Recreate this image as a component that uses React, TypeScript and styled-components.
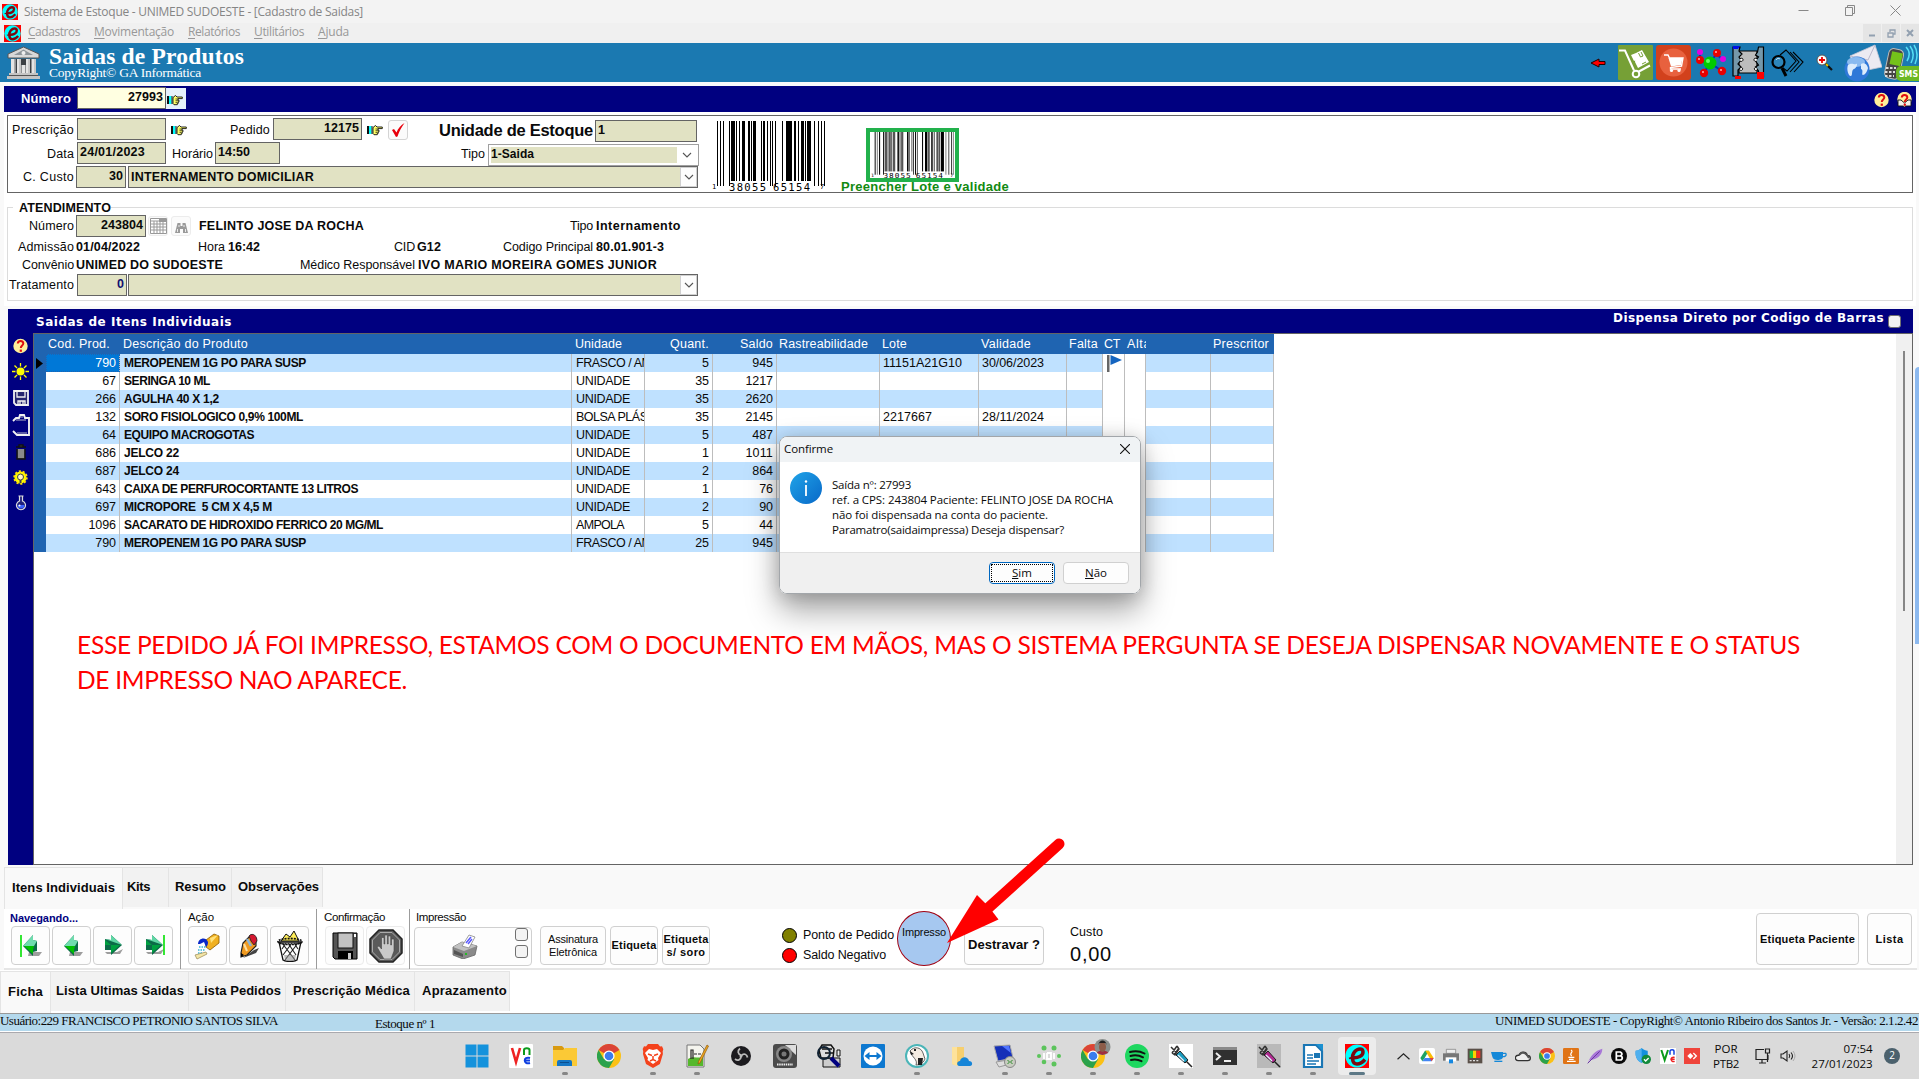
import React, { useLayoutEffect, useRef } from "react";
import styled, { createGlobalStyle, css } from "styled-components";

const ARIAL = '"Liberation Sans", Arial, sans-serif';
const TIMES = '"Liberation Serif", "Times New Roman", serif';
const SEGOE = '"Open Sans", "Noto Sans", sans-serif';
const VERDANA = '"DejaVu Sans", Verdana, sans-serif';

const Global = createGlobalStyle`
  *, *::before, *::after { box-sizing: border-box; }
  html, body { margin: 0; padding: 0; width: 1919px; height: 1079px; overflow: hidden; background: #fff; }
  body { font: 12px ${ARIAL}; color: #000; }
  svg { display: block; flex: none; }
`;

/* ---------- text ---------- */

const TextSpan = styled.span<{ $b?: boolean; $s?: number; $c?: string; $f?: string }>`
  display: inline-block;
  flex: none;
  width: max-content;
  white-space: pre;
  line-height: 1.15;
  font-family: ${(p) => p.$f || ARIAL};
  font-size: ${(p) => p.$s || 12.5}px;
  font-weight: ${(p) => (p.$b ? 700 : 400)};
  color: ${(p) => p.$c || "#0a0a0a"};
`;

type TProps = { w?: number; b?: boolean; s?: number; c?: string; f?: string; children: React.ReactNode };

/* Text whose tracking is adjusted so that it fills the given width. */
function T({ w, b, s, c, f, children }: TProps) {
  const ref = useRef<HTMLSpanElement>(null);
  useLayoutEffect(() => {
    const el = ref.current;
    if (!el || !w) return;
    el.style.letterSpacing = "0px";
    const n = (el.textContent || "").length;
    const natural = el.getBoundingClientRect().width;
    el.style.letterSpacing = (w - natural) / n + "px";
  }, [w, children]);
  return (
    <TextSpan ref={ref} $b={b} $s={s} $c={c} $f={f}>
      {children}
    </TextSpan>
  );
}

/* ---------- shared layout ---------- */

const Screen = styled.div`
  position: relative;
  width: 1919px;
  height: 1079px;
  display: flex;
  flex-direction: column;
  background: #f9f9f9;
  overflow: hidden;
  > * { flex-shrink: 0; }
`;
const Line = styled.div<{ $cols: string; $h: number; $mt?: number }>`
  display: grid;
  grid-template-columns: ${(p) => p.$cols};
  height: ${(p) => p.$h}px;
  margin-top: ${(p) => p.$mt || 0}px;
  align-items: center;
`;
const Cell = styled.div<{ $end?: boolean }>`
  display: flex;
  align-items: center;
  min-width: 0;
  justify-content: ${(p) => (p.$end ? "flex-end" : "flex-start")};
`;

/* ---------- window bars ---------- */

const TitleBar = styled.div`
  height: 23px;
  display: flex;
  align-items: center;
  background: #f3f3f3;
  padding: 0 16px 0 2px;
  gap: 6px;
`;
const MenuBar = styled.div`
  height: 20px;
  display: flex;
  align-items: center;
  background: #f0f0f0;
  padding-left: 4px;
`;
const MenuItems = styled.div`
  display: flex;
  gap: 14px;
  margin-left: 7px;
  margin-bottom: 2px;
  u { text-underline-offset: 2px; }
`;
const Spacer = styled.div`
  flex: 1;
`;
const WinControls = styled.div`
  display: flex;
  gap: 31px;
  margin-bottom: 2px;
`;
const MdiControls = styled.div`
  display: flex;
  gap: 1px;
`;
const MdiButton = styled.div`
  width: 18px;
  height: 18px;
  display: grid;
  place-items: center;
  background: #e5e5e5;
`;
const Header = styled.div`
  height: 39px;
  background: #1b79b1;
  display: flex;
  padding-left: 7px;
  align-items: center;
`;
const HeaderTitles = styled.div`
  display: flex;
  flex-direction: column;
  margin-left: 9px;
  margin-top: -1px;
  span + span { margin-top: -5px; }
`;
const HeaderIcons = styled.div`
  display: grid;
  grid-template-columns: 28px 38px 39px 37px 39px 45px 28px 38px 37px;
  align-items: center;
`;
const NumberBar = styled.div`
  margin: 4px 3px 0 4px;
  height: 26px;
  background: #000080;
  display: grid;
  grid-template-columns: 17px 56px 89px 20px 1fr 23px 19px;
  align-items: start;
`;
const LabelSlot = styled.div`
  height: 26px;
  display: flex;
  align-items: center;
  padding-top: 1px;
`;
const HandButton = styled.div`
  height: 21px;
  margin-top: 2px;
  background: #e5f1fb;
  display: flex;
  align-items: center;
  padding: 2px 0 0 1px;
`;

const Field = styled.div<{ $right?: boolean; $cream?: boolean; $combo?: boolean; $self?: string }>`
  height: 22px;
  border: 1px solid #646464;
  background: ${(p) => (p.$cream ? "#ffffe1" : "#e1e2c3")};
  display: flex;
  align-items: center;
  padding: 0 2px 1px 2px;
  justify-content: ${(p) => (p.$right ? "flex-end" : "flex-start")};
  ${(p) => p.$cream && css`margin-top: 1px;`}
  ${(p) => p.$self && css`align-self: ${p.$self};`}
  ${(p) => p.$combo && css`padding: 0 0 0 2px;`}
`;
const DropButton = styled.div`
  width: 17px;
  height: 20px;
  margin-left: auto;
  background: #fdfdfd;
  border: 1px solid #d0d0d0;
  display: grid;
  place-items: center;
`;
const TypeCombo = styled.div`
  height: 22px;
  margin-top: 2px;
  border: 1px solid #a0a0a0;
  background: #fff;
  padding: 2px;
  display: grid;
  grid-template-columns: 1fr 19px;
  place-items: stretch;
`;
const TypeValue = styled.div`
  background: #e1e2c3;
  display: flex;
  align-items: center;
`;
const Centered = styled.div`
  display: grid;
  place-items: center;
`;
const SmallButton = styled.div<{ $off?: boolean }>`
  width: 20px;
  height: 20px;
  border: 1px solid ${(p) => (p.$off ? "#ececec" : "#d4d4d4")};
  border-radius: 3px;
  background: #fbfbfb;
  display: grid;
  place-items: center;
`;

const RequestBox = styled.div`
  height: 78px;
  background: #fff;
  border: 1px solid #646464;
  display: flex;
`;
const RequestForm = styled.div`
  width: 691px;
  padding-top: 2px;
`;
const BigBarcode = styled.div`
  width: 113px;
  margin: 5px 0 0 13px;
`;
const LotBlock = styled.div`
  width: 170px;
  margin: 12px 0 0 16px;
`;
const LotFrame = styled.div`
  width: 93px;
  height: 54px;
  margin-left: 25px;
  border: 4px solid #22b14c;
  padding-left: 1px;
`;
const LotLabel = styled.div`
  margin-top: -3px;
  height: 16px;
  display: flex;
  align-items: center;
`;

const Attendance = styled.div`
  height: 94px;
  background: #fff;
  border: 1px solid #dcdcdc;
`;
const Legend = styled.div`
  width: 98px;
  height: 14px;
  margin: -7px 0 0 5px;
  padding-left: 6px;
  background: #fff;
  display: flex;
  align-items: center;
`;
const FormSurface = styled.div`
  background: #fff;
  margin: 0 3px 0 4px;
  height: 194px;
  overflow: hidden;
  > ${RequestBox} { margin: 3px 3px 0 3px; }
  > ${Attendance} { margin: 14px 3px 0 3px; }
`;

/* ---------- items panel ---------- */

const ItemsPanel = styled.div`
  margin: 3px 6px 0 8px;
  height: 556px;
  background: #000080;
  display: grid;
  grid-template-columns: 25px 1fr;
  grid-template-rows: 24px 532px;
`;
const PanelTitle = styled.div`
  grid-column: 1 / -1;
  display: flex;
  align-items: center;
  padding: 3px 12px 0 28px;
`;
const DirectOption = styled.div`
  display: flex;
  gap: 4px;
  height: 20px;
  margin-bottom: 2px;
`;
const Check = styled.div`
  width: 13px;
  height: 13px;
  margin-top: 3px;
  border: 1px solid #707070;
  border-radius: 3px;
  background: #f3f3f3;
`;
const SideTools = styled.div`
  display: grid;
  grid-template-rows: 26px 25px 27px 29px 24px 26px 26px;
  justify-items: center;
  align-items: center;
`;
const GridArea = styled.div`
  border: 1px solid #646464;
  background: #fff;
  display: grid;
  grid-template-columns: 1fr 16px;
`;
const ScrollTrack = styled.div`
  background: #f0f0f0;
  padding: 17px 0 0 7px;
`;
const ScrollThumb = styled.div`
  width: 2px;
  height: 260px;
  background: #868686;
`;
const GRID = "12px 74px 452px 73px 68px 64px 103px 99px 88px 36px 22px 21px 65px 63px";
const HeadRow = styled.div`
  display: grid;
  grid-template-columns: ${GRID};
  width: 1240px;
  height: 20px;
  background: #1f64b1;
`;
const HeadCell = styled.div<{ $end?: boolean; $pl?: number; $pr?: number }>`
  overflow: hidden;
  display: flex;
  align-items: center;
  justify-content: ${(p) => (p.$end ? "flex-end" : "flex-start")};
  padding: 0 ${(p) => p.$pr || 0}px 0 ${(p) => p.$pl || 0}px;
`;
const ItemRow = styled.div<{ $odd: boolean }>`
  display: grid;
  grid-template-columns: ${GRID};
  width: 1240px;
  height: 18px;
  background: ${(p) => (p.$odd ? "#bfe1ff" : "#fff")};
`;
const Marker = styled.div`
  background: #1f64b1;
  display: flex;
  align-items: center;
  padding-left: 2px;
`;
const ItemCell = styled.div<{ $end?: boolean; $sel?: boolean; $blank?: boolean; $pl?: number }>`
  border-right: 1px solid #bdbdbd;
  overflow: hidden;
  display: flex;
  align-items: center;
  padding: 1px ${(p) => (p.$end ? 3 : 0)}px 0 ${(p) => (p.$pl === undefined ? 3 : p.$pl)}px;
  justify-content: ${(p) => (p.$end ? "flex-end" : "flex-start")};
  ${(p) => p.$blank && css`background: #fff;`}
  ${(p) => p.$sel && css`background: #0078d7; outline: 1px dotted #1f64b1; outline-offset: -1px;`}
`;

/* ---------- lower tabs and tools ---------- */

const Tabs = styled.div<{ $mt?: number; $pl?: number; $white?: boolean }>`
  margin-top: ${(p) => p.$mt || 0}px;
  padding-left: ${(p) => p.$pl || 0}px;
  height: 43px;
  display: flex;
  background: ${(p) => (p.$white ? "#fff" : "#f9f9f9")};
`;
const Tab = styled.div<{ $w: number; $on?: boolean; $pl: number }>`
  width: ${(p) => p.$w}px;
  height: ${(p) => (p.$on ? 42 : 40)}px;
  margin-top: ${(p) => (p.$on ? 1 : 1)}px;
  padding: 0 0 ${(p) => (p.$on ? 0 : 1)}px ${(p) => p.$pl}px;
  display: flex;
  align-items: center;
  border: solid #e4e4e4;
  border-width: 1px 1px 0 ${(p) => (p.$on ? 1 : 0)}px;
  background: ${(p) => (p.$on ? "#f9f9f9" : "#f2f2f2")};
`;
const ToolStrip = styled.div`
  margin: 0 2px 0 4px;
  height: 61px;
  background: #fff;
  border-bottom: 2px solid #e6e6e6;
  display: flex;
  padding-left: 7px;
`;
const ToolGroup = styled.div<{ $w: number; $pl?: number }>`
  width: ${(p) => p.$w}px;
  padding-left: ${(p) => p.$pl || 0}px;
  border-right: 1px solid #9c9c9c;
  height: 60px;
`;
const GroupLabel = styled.div<{ $ml?: number }>`
  height: 17px;
  display: flex;
  align-items: center;
  padding-top: 1px;
  margin-left: ${(p) => (p.$ml === undefined ? -1 : p.$ml)}px;
`;
const ButtonRow = styled.div`
  display: flex;
  gap: 2px;
`;
const ToolButton = styled.div<{ $w?: number; $h?: number; $mt?: number; $ml?: number; $mr?: number; $soft?: boolean }>`
  width: ${(p) => p.$w || 39}px;
  height: ${(p) => p.$h || 39}px;
  margin: ${(p) => p.$mt || 0}px ${(p) => p.$mr || 0}px 0 ${(p) => p.$ml || 0}px;
  border: 1px solid ${(p) => (p.$soft ? "#ebebeb" : "#d0d0d0")};
  border-radius: 4px;
  background: #fdfdfd;
  display: flex;
  flex-direction: column;
  align-items: center;
  justify-content: center;
  flex: none;
`;
const PrintButton = styled.div`
  width: 118px;
  height: 39px;
  margin: 1px 0 0 4px;
  border: 1px solid #d0d0d0;
  border-radius: 4px;
  background: #fdfdfd;
  display: grid;
  grid-template-columns: 1fr 16px;
`;
const PrintChecks = styled.div`
  display: flex;
  flex-direction: column;
  gap: 4px;
  > div { margin-top: 0; }
`;
const LegendList = styled.div`
  margin: 16px 0 0 72px;
  width: 115px;
`;
const LegendItem = styled.div`
  display: flex;
  align-items: center;
  gap: 6px;
  height: 20px;
`;
const Dot = styled.div<{ $c: string }>`
  width: 15px;
  height: 15px;
  border-radius: 50%;
  border: 1px solid #000;
  background: ${(p) => p.$c};
`;
const PrintedBadge = styled.div`
  width: 54px;
  height: 55px;
  margin-top: 2px;
  flex: none;
  border: 1px solid #a00010;
  border-radius: 50%;
  background: #a6c8f0;
  display: flex;
  justify-content: center;
  padding-top: 14px;
`;
const Cost = styled.div`
  margin: 16px 0 0 26px;
  display: flex;
  flex-direction: column;
  gap: 4px;
`;
const StatusBar = styled.div`
  height: 19px;
  border-top: 1px solid #999;
  border-bottom: 1px solid #fff;
  background: #b4d9ed;
  display: grid;
  grid-template-columns: 375px 1fr 424px;
  align-items: start;
`;
const Low = styled.div`
  margin-top: 3px;
`;

/* ---------- taskbar ---------- */

const Taskbar = styled.div`
  height: 47px;
  background: #dadada;
  border-top: 1px solid #aaa9ae;
  display: grid;
  grid-template-columns: 455px 935px 1fr;
`;
const Apps = styled.div`
  grid-column: 2;
  display: grid;
  grid-template-columns: repeat(21, 44px);
`;
const AppSlot = styled.div<{ $active?: boolean }>`
  height: 38px;
  width: 38px;
  margin: 4px 0 0 3px;
  border-radius: 4px;
  display: flex;
  flex-direction: column;
  align-items: center;
  padding-top: 7px;
  background: ${(p) => (p.$active ? "#ececec" : "transparent")};
`;
const ProfileIcon = styled.div`
  width: 24px;
  height: 24px;
  > svg { margin-top: -5px; }
`;
const RunMark = styled.div<{ $active?: boolean }>`
  margin-top: 4px;
  width: ${(p) => (p.$active ? 16 : 6)}px;
  height: 3px;
  border-radius: 2px;
  background: ${(p) => (p.$active ? "#5c7886" : "#868686")};
`;
const Tray = styled.div`
  display: grid;
  grid-template-columns: repeat(13, 24.05px) 45px 28px 22px 74px 39px;
  align-items: center;
  height: 46px;
  margin-left: 1px;
`;
const TrayText = styled.div<{ $end?: boolean }>`
  display: flex;
  flex-direction: column;
  gap: 2px;
  align-items: ${(p) => (p.$end ? "flex-end" : "center")};
`;
const Notice = styled.div`
  width: 16px;
  height: 16px;
  border-radius: 50%;
  background: #4b616d;
  display: grid;
  place-items: center;
`;

/* ---------- overlays ---------- */

const Annotation = styled.div`
  position: absolute;
  left: 77px;
  top: 627px;
  display: flex;
  flex-direction: column;
  span { line-height: 35px; }
`;
const ArrowOverlay = styled.div`
  position: absolute;
  left: 940px;
  top: 830px;
`;
const EdgeTab = styled.div`
  position: absolute;
  right: 0;
  top: 367px;
  width: 4px;
  height: 277px;
  background: #8cb9ef;
  border-radius: 4px 0 0 0;
`;
const Dialog = styled.div`
  position: absolute;
  left: 779px;
  top: 436px;
  width: 362px;
  height: 158px;
  border: 1px solid #a2a6aa;
  border-radius: 8px;
  background: #fff;
  overflow: hidden;
  display: grid;
  grid-template-rows: 25px 90px 1fr;
`;
const DialogShadow = styled.div`
  position: absolute;
  left: 779px;
  top: 436px;
  width: 362px;
  height: 158px;
  border-radius: 8px;
  box-shadow: 0 16px 32px rgba(0, 0, 0, 0.36), 0 2px 18px rgba(0, 0, 0, 0.16);
`;
const DialogTitle = styled.div`
  background: #f0f3f5;
  display: flex;
  align-items: center;
  justify-content: space-between;
  padding: 0 10px 1px 4px;
`;
const DialogBody = styled.div`
  display: flex;
  padding: 10px 0 0 10px;
  gap: 10px;
`;
const DialogText = styled.div`
  display: flex;
  flex-direction: column;
  padding-top: 5px;
  span { line-height: 15px; }
`;
const DialogFooter = styled.div`
  background: #f0f0f0;
  border-top: 1px solid #dfdfdf;
  display: flex;
  justify-content: flex-end;
  gap: 8px;
  padding: 9px 11px 0 0;
`;
const DialogButton = styled.div<{ $focus?: boolean }>`
  width: 66px;
  height: 22px;
  border-radius: 4px;
  border: 1px solid ${(p) => (p.$focus ? "#0067c0" : "#d0d0d0")};
  background: #fdfdfd;
  padding: 1px;
`;
const FocusRing = styled.div<{ $on?: boolean }>`
  width: 100%;
  height: 100%;
  border: 1px dotted ${(p) => (p.$on ? "#000" : "transparent")};
  display: grid;
  place-items: center;
`;

/* ---------- drawings ---------- */

const ELogo = ({ s = 16 }: { s?: number }) => (
  <svg width={s} height={s} viewBox="0 0 24 24">
    <rect width="24" height="24" fill="#f00" />
    <circle cx="12" cy="12" r="11.6" fill="#0ff" />
    <path d="M7 13.500c6 .8 11-1.500 11-5.500 0-4-5-4.200-8.500-.2C6.500 11.500 6.500 20 12 20c3.500 0 6-2.200 8-4.500" fill="none" stroke="#7c0a10" strokeWidth="3.500" />
    <path d="M4 14.500c2.500-1 4-1 6-1" stroke="#7c0a10" strokeWidth="1.800" fill="none" />
  </svg>
);
const Hand = () => (
  <svg width="16" height="12" viewBox="0 0 16 12">
    <path d="M0 2h2v8H0z" fill="#111" />
    <path d="M2 2h2.500v8H2z" fill="#0ff" />
    <path d="M4.500 2h1v8h-1z" fill="#111" />
    <path d="M6 3.500l2.500-2L10 3h5.300v1.600H11v1.600h1v1.600h-.8v1.600h-.9v1.300H7L6 9.500z" fill="#ffff66" stroke="#111" strokeWidth=".9" />
    <path d="M8.500 5h2.500M8.500 6.700h2.500M8.500 8.400h2" stroke="#111" strokeWidth=".7" />
  </svg>
);
const Chevron = () => (
  <svg width="10" height="6" viewBox="0 0 10 6">
    <path d="M1 1l4 4 4-4" fill="none" stroke="#555" strokeWidth="1.100" />
  </svg>
);
const RedCheck = () => (
  <svg width="16" height="16" viewBox="0 0 16 16">
    <path d="M2 8l2-1 2.500 3.500C8 6.500 11 3 14.500 1 11.500 5 9 10 7.500 14.500L6 15z" fill="#e8000c" />
  </svg>
);
const Building = () => (
  <svg width="33" height="33" viewBox="0 0 33 33">
    <path d="M16.500 1L32 8v4H1V8z" fill="#d8d8d8" stroke="#555" />
    <path d="M16.500 3.500L26 9H7z" fill="#8d9499" />
    <circle cx="16.500" cy="7" r="2" fill="#eee" />
    <path d="M5 13h23v14H5z" fill="#3c4044" />
    <path d="M4 13h4.500v14H4zM10 13h4v14h-4zM19 13h4v14h-4zM24.500 13H29v14h-4.500zM14.500 19h4v8h-4z" fill="#e4e4e4" />
    <path d="M7.500 13v14M13 13v14M22 13v14M28 13v14" stroke="#aaa" />
    <path d="M2 27h29v2H2zM0 30h33v3H0z" fill="#c4c4c4" />
    <path d="M2 29h29v1H2z" fill="#555" />
  </svg>
);
const RedArrowLeft = () => (
  <svg width="16" height="10" viewBox="0 0 16 10">
    <path d="M1 5l8-4v2.500h6v3H9V9z" fill="#f00" stroke="#200" />
  </svg>
);
const TrolleyTile = () => (
  <svg width="35" height="35" viewBox="0 0 35 35">
    <rect width="35" height="35" rx="1" fill="#76a036" />
    <path d="M1 5.500h6l9 20M20 27l12-6.500" fill="none" stroke="#fff" strokeWidth="2" />
    <path d="M13 10l5-2 2.500 6-4.500 2zM18 8l6-3 7 12-11 6-3-6z" fill="#fff" />
    <path d="M20.500 8l2 4 2.500-1-2-4M24 19l4-2" stroke="#76a036" fill="none" />
    <circle cx="18" cy="29" r="3.300" fill="none" stroke="#fff" strokeWidth="2" />
  </svg>
);
const CartTile = () => (
  <svg width="35" height="35" viewBox="0 0 35 35">
    <rect width="35" height="35" rx="3" fill="#d2411c" />
    <circle cx="17.500" cy="17.500" r="14" fill="#e8613e" />
    <path d="M8 10h4l1.500 3H27l-1.500 8-11 1.500 0 1.500H25" fill="none" stroke="#fff" strokeWidth="1.400" />
    <path d="M12.500 13H26.500l-1.500 7-10 1.500z" fill="#fff" />
    <circle cx="15.500" cy="25.500" r="1.600" fill="#fff" />
    <circle cx="23" cy="25.500" r="1.600" fill="#fff" />
  </svg>
);
const Molecule = () => (
  <svg width="32" height="30" viewBox="0 0 32 30">
    <path d="M5 4v9l10 2 7-10M15 15l-6 10M15 15l12 8M20 5l7 6" stroke="#0030c0" strokeWidth="2" fill="none" />
    <circle cx="15" cy="15" r="6.500" fill="#0c0" />
    <circle cx="13" cy="13" r="2" fill="#6f6" />
    <g fill="#e80000">
      <circle cx="5" cy="12" r="4" /><circle cx="22" cy="5" r="4" /><circle cx="9" cy="25" r="4.200" /><circle cx="27" cy="23" r="4.200" />
    </g>
    <g fill="#e000e0"><circle cx="5" cy="4" r="3" /><circle cx="28" cy="11" r="3" /></g>
    <g fill="#ffb0b0"><circle cx="4" cy="11" r="1" /><circle cx="21" cy="4" r="1" /><circle cx="8" cy="24" r="1" /><circle cx="26" cy="22" r="1" /></g>
  </svg>
);
const Puzzle = () => (
  <svg width="33" height="33" viewBox="0 0 33 33">
    <path d="M7 5h18v22H7z" fill="#bdbdbd" stroke="#000" strokeWidth="1.200" />
    <path d="M1 1h7l-1 4 3 3-3 3 2 3-3 4 3 3-3 3v6H1zM31.500 1h-5l-1 5-2 3 3 2-3 4 3 4-3 2 3 4v6h5z" fill="#7598aa" stroke="#000" strokeWidth="1.200" />
    <path d="M8 13c4-3 4 4 0 2M25 13c-4-3-4 4 0 2M8 22c4-2 3 4 0 2M25 22c-4-2-3 4 0 2" fill="#fff" stroke="#000" />
    <path d="M1 0h7l-2 3H1z" fill="#0010e8" />
    <path d="M3 30h6v3H3zM25 26h7v7h-7z" fill="#f00" />
  </svg>
);
const Cards = () => (
  <svg width="33" height="28" viewBox="0 0 33 28">
    <path d="M9 6l6-5 10 11-9 10-4-3M19 3l9 10-9 10M22 3l10 10-9 10M17 3l8 9" fill="none" stroke="#000" strokeWidth="1.100" />
    <circle cx="7.500" cy="13" r="6" fill="#2d86ba" stroke="#000" strokeWidth="2.200" />
    <path d="M5 11c1-2 3-2 4-1" stroke="#cde" fill="none" />
    <path d="M11 19l4 8" stroke="#000" strokeWidth="3" />
  </svg>
);
const ZoomPlus = () => (
  <svg width="18" height="17" viewBox="0 0 18 17">
    <path d="M9 9l7 7" stroke="#111" strokeWidth="2.200" />
    <path d="M10 10l2 2" stroke="#e6c200" strokeWidth="2" />
    <circle cx="6" cy="6" r="5" fill="#fff" stroke="#555" />
    <path d="M6 3v6M3 6h6" stroke="#e00" strokeWidth="1.800" />
  </svg>
);
const MailGlobe = () => (
  <svg width="38" height="38" viewBox="0 0 38 38">
    <path d="M6 12L31 1l7 22-24 5z" fill="#eceaf2" stroke="#c8c6d6" strokeWidth=".8" />
    <path d="M6 12l18 4L31 1" fill="none" stroke="#bbb8cc" />
    <circle cx="13" cy="25" r="12.500" fill="#2f78d8" />
    <ellipse cx="12" cy="18" rx="9" ry="5" fill="#a8d0f8" opacity=".75" />
    <path d="M4 21c4-3 6 0 8-1s1 4-2 5-1 6-3 7-5-6-3-11zM17 20c3-2 6 0 7 4-1 4-3 7-5 7s1-5-2-6z" fill="#dcecfc" />
  </svg>
);
const Sms = () => (
  <svg width="37" height="38" viewBox="0 0 37 38">
    <rect x="5" y="5" width="15" height="30" rx="5" transform="rotate(12 13 18)" fill="#454545" stroke="#bbb" />
    <rect x="8" y="8" width="11" height="13" transform="rotate(12 13 18)" fill="#74c21a" />
    <path d="M4 24h10M3 28h10M3 32h9" stroke="#ddd" strokeWidth="2" strokeDasharray="2.500 1.500" />
    <path d="M24 3c4 4 4 9 1 14M28 2c4 5 4 11 1 17M32 1c4 6 4 12 1 19" stroke="#55dff5" strokeWidth="1.500" fill="none" />
    <rect x="14" y="22" width="28" height="15" rx="5" fill="#6cb924" />
    <text x="17" y="33" fontFamily="DejaVu Sans, sans-serif" fontSize="8.500" fontWeight="700" fill="#fff" textLength="19" lengthAdjust="spacingAndGlyphs">SMS</text>
  </svg>
);
const Help = ({ book }: { book?: boolean }) => (
  <svg width="15" height="16" viewBox="0 0 15 16">
    <circle cx="7.500" cy={book ? 7 : 8} r="7.200" fill="#ffef9a" />
    {book && <path d="M1 8h3l3.500 3L11 8h3v6H9l-1.500 1L6 14H1z" fill="#f4f2ea" stroke="#111" strokeWidth=".9" />}
    <path d="M4.800 5.500c0-3.500 5.500-3.500 5.500 0 0 2-2.500 2-2.500 4.500" fill="none" stroke="#e01010" strokeWidth="2" />
    <rect x="6.700" y="11.600" width="2.200" height="2.200" fill="#e01010" />
  </svg>
);
const GridIcon = () => (
  <svg width="17" height="16" viewBox="0 0 17 16">
    <path d="M.5.5h16v15H.5z" fill="#fff" stroke="#999" />
    <path d="M1 3h15M1 6h15M1 9h15M1 12h15M4 3v12M7 3v12M10 3v12M13 3v12" stroke="#999" />
    <path d="M9 1h7v3H9z" fill="#999" />
  </svg>
);
const Binoculars = () => (
  <svg width="13" height="15" viewBox="0 0 13 15">
    <path d="M2.500 4h3v3h2V4h3l2.500 10H8v-4H5v4H0z" fill="#9a9a9a" />
    <path d="M2.500 10v3M10.500 10v3M4 6v2M9 6v2" stroke="#fff" strokeWidth=".8" />
  </svg>
);

const BARS: number[][] = [
  [4, 1.3], [7, 1], [10, 1.4], [15.5, 1.2], [17.5, 4], [23, 1.4], [25.5, 1.5], [28.5, 3.5], [35, 2], [38, 1], [40, 3],
  [48, 1.3], [50, 1.5], [54, 1.3], [56.5, 1], [59, 1.3], [61.5, 1.3], [68.5, 1.4], [72.5, 3], [76, 3], [81, 2], [84.5, 1],
  [88, 3], [91.5, 1], [94, 4.3], [100.5, 1], [104.5, 1], [108, 1], [110.5, 1],
];
const Barcode = ({ w, h, soft }: { w: number; h: number; soft?: boolean }) => (
  <svg width={w} height={h} viewBox="0 0 113 70" preserveAspectRatio="none" shapeRendering={soft ? "auto" : "crispEdges"}>
    {BARS.map(([x, bw], i) => {
      const guard = i < 4 || i > 24 || (i > 13 && i < 17);
      return <rect key={x} x={x + 1} y="0" width={bw} height={guard ? 65 : 60} fill={soft && i % 3 === 1 ? "#555" : "#000"} />;
    })}
    <g fontFamily="DejaVu Sans Mono, monospace" fontSize="10.500" fill="#000">
      <text x="0" y="68" fontSize="7">1</text>
      <text x="17" y="69.500" textLength="37">38055</text>
      <text x="61" y="69.500" textLength="37">65154</text>
      <text x="108" y="68" fontSize="7">7</text>
    </g>
  </svg>
);

const Sun = () => (
  <svg width="17" height="17" viewBox="0 0 17 17">
    <path d="M8.500 0v17M0 8.500h17M2.500 2.500l12 12M14.500 2.500l-12 12" stroke="#ff0" strokeWidth="1.300" />
    <circle cx="8.500" cy="8.500" r="5" fill="#000080" />
    <circle cx="8.500" cy="8.500" r="4" fill="#ff0" />
  </svg>
);
const SideFloppy = () => (
  <svg width="16" height="16" viewBox="0 0 16 16">
    <path d="M1 1h14v14H3l-2-2z" fill="#26266e" stroke="#f0f0f0" strokeWidth="1.800" />
    <path d="M4 1v6h8V1M5 15v-4h7v4M7 11v3M10 11v3" stroke="#f0f0f0" fill="none" strokeWidth="1.300" />
  </svg>
);
const Clipboard = () => (
  <svg width="18" height="23" viewBox="0 0 18 23">
    <path d="M1 7l3-3h3l1-3h4l1 3h4v17H5l-4-4" fill="none" stroke="#f0f0f0" strokeWidth="1.900" />
    <path d="M4 6h10M8 3h3M5 19h10" stroke="#b5b5c8" strokeWidth="1.200" />
  </svg>
);
const TrashSmall = () => (
  <svg width="12" height="16" viewBox="0 0 12 16">
    <path d="M1 3h10M4 3V1h4v2M2 5v10h8V5" fill="#555" stroke="#111" strokeWidth="1.400" />
    <path d="M4 5v9M6 5v9M8 5v9" stroke="#ccc" strokeWidth=".9" />
  </svg>
);
const Gear = () => (
  <svg width="15" height="15" viewBox="0 0 15 15">
    <circle cx="7.500" cy="7.500" r="6" fill="#ff0" stroke="#ffe000" strokeWidth="2.400" strokeDasharray="2 1.700" />
    <circle cx="7.500" cy="7" r="3" fill="#fff8c0" stroke="#444" />
    <path d="M6.500 10h2v3h-2z" fill="#444" />
  </svg>
);
const Flask = () => (
  <svg width="12" height="16" viewBox="0 0 12 16">
    <path d="M3.500 1h5M4.500 1v5a4.500 4.500 0 1 0 3 0V1" fill="#20207c" stroke="#ddd" strokeWidth="1.200" />
    <path d="M2.500 10h7a3.500 3.500 0 0 1-7 0z" fill="#3a60ff" />
    <circle cx="4.500" cy="10.500" r="1" fill="#fff" />
  </svg>
);
const Flag = () => (
  <svg width="15" height="18" viewBox="0 0 15 18">
    <path d="M0 0h2.500v18H0z" fill="#666" />
    <path d="M3.500 0L15 5 3.500 10z" fill="#1565c0" />
  </svg>
);
const NavArrow = ({ dir, bar }: { dir: "l" | "r"; bar?: boolean }) => (
  <svg width="24" height="24" viewBox="0 0 24 24">
    <path d={dir === "l" ? "M10 18h13l-3 4H9z" : "M4 18h12l6-3-3 5H6z"} fill="#8c8c8c" opacity=".85" />
    {dir === "l" ? (
      <>
        <path d="M4 12L14 1v5l4 1v10l-4 1v4z" fill="#0b6b48" />
        <path d="M4 12L14 1v5l4 1-3 5z" fill="#6fdcae" />
        <path d="M5 12h10l-1 4v4z" fill="#00c000" />
        {bar && <path d="M2 1v22" stroke="#00e000" strokeWidth="1.600" />}
      </>
    ) : (
      <>
        <path d="M21 11L10 1v5L4 5v11l6 0v5z" fill="#0b6b48" />
        <path d="M21 11L10 1v5L4 5z" fill="#5fd6a4" />
        <path d="M4 6l6 5H4zM10 11h9l-9 8z" fill="#00a040" />
        {bar && <path d="M22 1v20" stroke="#00e000" strokeWidth="1.600" />}
      </>
    )}
  </svg>
);
const Pour = () => (
  <svg width="27" height="28" viewBox="0 0 27 28">
    <path d="M12 8l8-6 5 2v7l-9 7-4-3z" fill="#f0b020" stroke="#8a5a00" strokeWidth=".8" />
    <path d="M16 6l8-3-7 8z" fill="#ffe27a" />
    <path d="M4 12c0-6 8-8 10-2 0 3-1 4-2 5l-2-5-4 2z" fill="#0a28c8" />
    <path d="M5 15h7M4 18h7M4 21h5" stroke="#35b5d8" strokeWidth="1.400" strokeDasharray="1.500 1" />
    <path d="M1 23l11-3 1 2-10 5z" fill="#f4e6a6" stroke="#a09060" strokeWidth=".8" />
  </svg>
);
const Pencil = () => (
  <svg width="20" height="26" viewBox="0 0 20 26">
    <path d="M4 25l13-5 3-5-5 2z" fill="#444" />
    <path d="M2 20L4 10 12 2l5 3v8L8 22l-6 2z" fill="#f09a20" stroke="#222" strokeWidth="1.200" />
    <path d="M10 3c4-4 8 0 8 5l-3 4-3-4z" fill="#d41830" stroke="#222" strokeWidth=".8" />
    <path d="M8 6l4 7" stroke="#8ab4d8" strokeWidth="2.500" />
    <path d="M5 11l3 7" stroke="#ffe0a0" strokeWidth="2" />
    <path d="M2 20l3 2-3 2z" fill="#000" />
  </svg>
);
const Basket = () => (
  <svg width="26" height="32" viewBox="0 0 26 32">
    <path d="M4 11L9 4l4 3 4-6 5 10z" fill="#ffee58" stroke="#111" />
    <path d="M2 12h22l-4 18c-3 2-11 2-14 0z" fill="#fff" stroke="#111" strokeWidth="1.300" />
    <path d="M5 13l13 17M11 13l8 12M17 13l4 6M21 13L8 30M15 13L6 25M9 13l-4 6" stroke="#222" strokeWidth="1.100" />
    <ellipse cx="13" cy="11.500" rx="12" ry="3" fill="none" stroke="#111" strokeWidth="1.800" strokeDasharray="2 1" />
    <path d="M7 25h12l-1 5c-3 1-7 1-10 0z" fill="#888" opacity=".55" />
  </svg>
);
const Floppy = () => (
  <svg width="26" height="28" viewBox="0 0 26 28">
    <path d="M1 1h24v26H3l-2-2z" fill="#555" stroke="#000" />
    <rect x="6" y="1" width="15" height="15" fill="#c2c2c2" stroke="#111" />
    <rect x="6" y="19" width="15" height="8" fill="#000" />
    <rect x="16" y="21" width="3" height="6" fill="#ccc" />
    <rect x="22" y="2" width="2" height="3" fill="#fff" />
  </svg>
);
const Stop = () => (
  <svg width="34" height="34" viewBox="0 0 34 34">
    <path d="M10 1h14l9 9v14l-9 9H10l-9-9V10z" fill="#5a5a5a" stroke="#222" strokeWidth="1.500" />
    <path d="M11 3.500h12l7.500 7.500v12L23 30.500H11L3.500 23V11z" fill="none" stroke="#aaa" />
    <path d="M8 18l2-1 2.500 3V8.500h2.500V15h.8V6h2.600v9h.8V7h2.500v9h.8v-6H25v12l-3 8h-7z" fill="#c9c9c9" stroke="#444" strokeWidth=".6" />
  </svg>
);
const Printer = () => (
  <svg width="28" height="25" viewBox="0 0 28 25">
    <path d="M2 13l9-5 15 4-2 9-12 4-10-4z" fill="#8a8a8a" stroke="#666" strokeWidth=".8" />
    <path d="M2 13l9-5 15 4-13 5z" fill="#c2c2c2" />
    <path d="M11 12l7-11 6 2-6 11z" fill="#fff" stroke="#888" strokeWidth=".8" />
    <path d="M15 9l5-6M17 10l4-5" stroke="#5a5aff" strokeWidth="1.500" />
    <path d="M3 16l9 4v3l-9-3z" fill="#555" />
    <circle cx="15" cy="20" r="1" fill="#0c0" />
  </svg>
);
const InfoIcon = () => (
  <svg width="32" height="32" viewBox="0 0 32 32">
    <defs>
      <linearGradient id="info" x1="0" y1="0" x2="1" y2="1">
        <stop offset="0" stopColor="#20a4e8" />
        <stop offset="1" stopColor="#0868c8" />
      </linearGradient>
    </defs>
    <circle cx="16" cy="16" r="16" fill="url(#info)" />
    <path d="M16 13v11" stroke="#fff" strokeWidth="1.800" />
    <circle cx="16" cy="9.500" r="1.200" fill="#fff" />
  </svg>
);

const Ico = ({ s = 24, children }: { s?: number; children: React.ReactNode }) => (
  <svg width={s} height={s} viewBox="0 0 24 24">{children}</svg>
);
const ChromeShape = () => (
  <>
    <circle cx="12" cy="12" r="12" fill="#fbc116" />
    <path d="M12 12L1.600 6A12 12 0 0 1 22.400 6z" fill="#db4437" />
    <path d="M1.600 6A12 12 0 0 0 12 24l5.200-9L12 12l-5.200 3z" fill="#2ba24c" />
    <circle cx="12" cy="12" r="5.600" fill="#fff" />
    <circle cx="12" cy="12" r="4.300" fill="#3b7ded" />
  </>
);
const VncShape = () => (
  <>
    <rect width="24" height="24" rx="1" fill="#fff" />
    <path d="M3 4l4 14 4-14" fill="none" stroke="#e22" strokeWidth="2.600" />
    <path d="M15 11V6c0-2.500 5.500-2.500 5.500 0v5" fill="none" stroke="#0a9a1c" strokeWidth="2" />
    <path d="M21 14c-7-2-7 7 0 5M15.500 16.500H21" fill="none" stroke="#1040e0" strokeWidth="2" />
  </>
);
const Syringe = ({ bg, body }: { bg: string; body: string }) => (
  <>
    <rect width="24" height="24" fill={bg} />
    <path d="M2 3l5 5M8 2L3 9M3 9l3 2 4-6-2-3M10 4l-5 7" stroke="#333" strokeWidth="1.500" fill="none" />
    <path d="M7 11l4-4 8 9-3 3z" fill={body} stroke="#222" />
    <path d="M9 11l6 6" stroke="#e8f4ff" strokeWidth="1.300" />
    <path d="M17 17l6 6" stroke="#222" strokeWidth="1.500" />
  </>
);
const ChromeProfile = () => (
  <ProfileIcon>
    <svg width="30" height="29" viewBox="0 -5 30 29">
      <ChromeShape />
      <circle cx="21.500" cy="3" r="8" fill="#8a8f8c" />
      <path d="M16 9c0-3 11-3 11 0l-5.500 2z" fill="#a03040" />
      <ellipse cx="21.500" cy="3" rx="3.500" ry="5" fill="#8c5c48" />
      <path d="M17.500 1c0-6 8-6 8 0l-1-2h-6z" fill="#222" />
    </svg>
  </ProfileIcon>
);

type AppEntry = { icon?: React.ReactNode; node?: React.ReactNode; run?: boolean; active?: boolean };
const apps: AppEntry[] = [
  { icon: <path d="M.5.5h11v11H.5zM12.500.5h11v11h-11zM.5 12.500h11v11H.5zM12.500 12.500h11v11h-11z" fill="#1492dc" /> },
  { icon: <VncShape /> },
  { icon: <><path d="M0 2h9l2 2v5H0z" fill="#d99a10" /><path d="M0 6h10l2-2h12v18H0z" fill="#fbc936" /><path d="M4 22v-4q0-2 2-2h11q2 0 2 2v4z" fill="#1676c4" /><path d="M7 18.500h9" stroke="#0c4f8f" /></>, run: true },
  { icon: <ChromeShape /> },
  { icon: <><path d="M7 0h10l2 2.500 2-.3 1.300 3-.6 2.300.2 2.500-3 10L12 24l-7-4-3-10 .2-2.500L1.700 5 3 2.200l2 .3z" fill="#f4421c" /><path d="M8 5l4 1 4-1 4 4-3 5 .5 2L12 20l-5.500-4 .5-2-3-5z" fill="#fff" /><path d="M7 10l4 1.500M17 10l-4 1.500M12 12v3M9 17l3-1.500 3 1.500" stroke="#f4421c" strokeWidth="1.500" fill="none" /></>, run: true },
  { icon: <><path d="M2 1h13l4 4v18H2z" fill="#f4f4ee" stroke="#777" /><path d="M3 15c5-4 10 0 15-2v9H3z" fill="#55b82c" /><path d="M6 15V6h2v9M9 10h3M13 10h3" stroke="#222" fill="none" strokeWidth="1.200" /><path d="M22 1l1.500 1L15 19l-2 1 .5-2.500z" fill="#f5a81c" stroke="#8a5a10" strokeWidth=".7" /></>, run: true },
  { icon: <><circle cx="12" cy="12" r="10" fill="#1c1b1f" /><path d="M12 11c-3-1-4-4-1-6.500M12.500 11.500c2-2.500 5.500-1.500 6 2M12 12.500c0 3.500-3.500 4.500-6 2.500" fill="none" stroke="#bbb" strokeWidth="1.800" /><circle cx="12" cy="12" r="1.500" fill="#bbb" /></> },
  { icon: <><rect width="24" height="24" rx="3" fill="#4b4b4b" /><path d="M12 1h11v10z" fill="#ddd" /><circle cx="11" cy="10" r="8" fill="#888" /><circle cx="11" cy="10" r="5.500" fill="#222" /><circle cx="11" cy="10" r="2.500" fill="#777" /><path d="M4 20.500h16" stroke="#eee" strokeWidth="2" strokeDasharray="1.500 .7" /></> },
  { icon: <><path d="M6 14h17v9H6z" fill="#ccc" stroke="#111" /><path d="M5 1h9l3 4-1 9H4L2 6z" fill="#ddd" stroke="#111" strokeWidth="1.500" /><path d="M20 6h3v6h-3z" fill="#eee" stroke="#111" /><path d="M5 5h10M8 9h8" stroke="#111" strokeWidth="1.600" /><circle cx="7" cy="9" r="6" fill="none" stroke="#123" strokeWidth="2" /><path d="M14 14l8 8" stroke="#000080" strokeWidth="4" /></> },
  { icon: <><rect width="24" height="24" rx="1" fill="#0d78d0" /><circle cx="12" cy="12" r="9.500" fill="#fff" /><path d="M3.500 12l5-4v3h7V8l5 4-5 4v-3h-7v3z" fill="#0d78d0" /></> },
  { icon: <><circle cx="12" cy="12" r="12" fill="#4bb5b8" /><circle cx="12" cy="12" r="10" fill="#fff" /><path d="M5 7c4-5 11-4 13 2l2 6c-2 5-6 6-9 6 2-6-4-7-6-14z" fill="#f4ece2" stroke="#444" strokeWidth=".8" /><path d="M5 7l4 3-3 1zM13 14h5l-1 7h-4zM9 5h2v2H9z" fill="#222" /></>, run: true },
  { icon: <><path d="M3 3h12v18l-4 1-8-2z" fill="#f7cf6e" /><path d="M3 3h5v19l-5-2z" fill="#fde29b" /><path d="M10 22c-3-1-2-5 1-5 1-5 8-5 9 0 4 0 4 5 1 5z" fill="#1685d8" /></> },
  { icon: <><path d="M1 2l16-1 3 13-15 3z" fill="#1530b8" stroke="#aaa" /><path d="M9 2h7l2 7z" fill="#4f74ff" /><path d="M3 18l12-2 2 4-11 3z" fill="#ddd" stroke="#999" /><circle cx="17" cy="18" r="5.500" fill="#c8ccc0" stroke="#888" /><path d="M14.500 16l2 2-2 2M19.500 16l-2 2 2 2" stroke="#2a8a2a" fill="none" /></>, run: true },
  { icon: <><g fill="#5cc45c"><circle cx="7" cy="4" r="2.500" /><circle cx="17" cy="4" r="2.500" /><circle cx="2" cy="12" r="2" /><circle cx="22" cy="12" r="2" /><circle cx="7" cy="18" r="2.300" /><circle cx="17" cy="20" r="2.500" /></g><path d="M7 9v6M10 9v6h4V9h-4M17 9v6" stroke="#fff" strokeWidth="1.800" fill="none" /></>, run: true },
  { node: <ChromeProfile />, run: true },
  { icon: <><circle cx="12" cy="12" r="12" fill="#1ed760" /><path d="M5 8c5-1.500 10-1 14.500 1.500M5.500 12c4.500-1.300 8.500-.8 12.500 1.300M6 16c4-1 7-.6 10.500 1.200" stroke="#111" strokeWidth="2" fill="none" strokeLinecap="round" /></>, run: true },
  { icon: <Syringe bg="#fff" body="#1a9cc0" />, run: true },
  { icon: <><path d="M0 3h24v18H0z" fill="#303030" /><path d="M0 3h24v3H0z" fill="#8a8a8a" /><path d="M3 9l4 3.500L3 16" stroke="#eee" fill="none" strokeWidth="2" /><path d="M11 17h7" stroke="#eee" strokeWidth="2" /></>, run: true },
  { icon: <Syringe bg="#b9b9b9" body="#b02a90" />, run: true },
  { icon: <><path d="M3 1h12l6 6v16H3z" fill="#fff" stroke="#1a76b4" strokeWidth="2.200" /><path d="M15 0h7v7z" fill="#1a90d0" /><path d="M6 11h6M6 14h6M6 17h12M6 20h9" stroke="#1a76b4" strokeWidth="1.300" /><path d="M13 9h6v5h-6z" fill="#1a76b4" /></>, run: true },
  { node: <ELogo s={24} />, run: true, active: true },
];

const tray: React.ReactNode[] = [
  <path d="M1 17L12 7l11 10" fill="none" stroke="#222" strokeWidth="2.200" />,
  <><rect width="24" height="24" rx="3" fill="#fff" /><path d="M9 4h6l-6.500 11L5 20l-3-5z" fill="#1ea362" /><path d="M15 4l7 11h-6L9.500 4z" fill="#fbbc04" /><path d="M8.500 15H22l-3 5H5z" fill="#4285f4" /><path d="M16 15h6l-3 5z" fill="#ea4335" /></>,
  <><path d="M5 2h14v6H5z" fill="#eee" stroke="#777" /><path d="M0 8h24v11H0z" fill="#777" /><path d="M4 14h16v6H4z" fill="#fff" /><path d="M9 17h6v6H9z" fill="#1688e0" /></>,
  <><rect x="1" y="1" width="22" height="22" fill="#5a5048" /><path d="M4 4h5v11H4z" fill="#20c040" /><path d="M9 4h5v11H9z" fill="#ffd000" /><path d="M14 4h6v11h-6z" fill="#f03020" /><path d="M4 19h3M9 19h3M14 19h3" stroke="#ddd" strokeWidth="2" /></>,
  <><path d="M0 6h18v7c0 6-15 7-16 0z" fill="#1488d8" /><path d="M17 8h5q2 3-2 5h-3" stroke="#1488d8" strokeWidth="2" fill="none" /><path d="M5 20h12" stroke="#1488d8" strokeWidth="2" /></>,
  <><path d="M5 19c-7-1-5-9 1-8 2-7 12-6 12 0 7 0 6 8 1 8z" fill="#eee" stroke="#333" strokeWidth="2" /><path d="M7 10c4-5 10-3 14 5" stroke="#555" strokeWidth="3" fill="none" /></>,
  <ChromeShape />,
  <><rect width="24" height="24" rx="2" fill="#e07416" /><path d="M12 3c5 3-4 5 1 9M8 14h9M9 17h7M6 20h13" stroke="#fff" strokeWidth="1.700" fill="none" /></>,
  <><path d="M1 23C5 12 12 4 23 1c0 10-8 16-19 17z" fill="#a877d8" /><path d="M1 23L19 5" stroke="#6a3aa0" strokeWidth="1.500" /></>,
  <><circle cx="12" cy="12" r="12" fill="#0a0a0a" /><path d="M8 6h6q5 3 0 6H8zM8 12h7q4 3 0 6H8z" fill="none" stroke="#fff" strokeWidth="2.600" /></>,
  <><path d="M1 4c4 0 7-2 9-4 3 3 6 4 9 4 1 9-2 15-9 18C3 19 0 13 1 4z" fill="#1390de" /><path d="M10 0v22C3 19 0 13 1 4c4 0 7-2 9-4z" fill="#50b0ee" /><circle cx="17" cy="17" r="7" fill="#128a3c" /><path d="M13.500 17l2.500 2.500 4.500-4.500" stroke="#fff" strokeWidth="2" fill="none" /></>,
  <><rect width="24" height="24" fill="#fff" /><path d="M2 3l5 15 5-15" fill="none" stroke="#0a9a1c" strokeWidth="3" /><path d="M15 10V5c0-3 6-3 6 0v5" fill="none" stroke="#1040e0" strokeWidth="2.200" /><path d="M22 14c-7-2-7 8 0 6M15.500 17H22" fill="none" stroke="#e22" strokeWidth="2.200" /></>,
  <><rect width="24" height="24" fill="#ef443b" /><path d="M5 12l4.500-4.500L14 12l-4.500 4.500z" fill="#fff" /><path d="M14 7.500l4.500 4.500-4.500 4.500" stroke="#fff" strokeWidth="2" fill="none" /></>,
];

/* ---------- data ---------- */

type Item = [string, string, number, string, string, string, string?, string?];
const items: Item[] = [
  ["790", "MEROPENEM 1G PO PARA SUSP", 182, "FRASCO / AMPOLA", "5", "945", "11151A21G10", "30/06/2023"],
  ["67", "SERINGA 10 ML", 86, "UNIDADE", "35", "1217"],
  ["266", "AGULHA 40 X 1,2", 95, "UNIDADE", "35", "2620"],
  ["132", "SORO FISIOLOGICO 0,9% 100ML", 179, "BOLSA PLÁSTICA", "35", "2145", "2217667", "28/11/2024"],
  ["64", "EQUIPO MACROGOTAS", 130, "UNIDADE", "5", "487"],
  ["686", "JELCO 22", 55, "UNIDADE", "1", "1011"],
  ["687", "JELCO 24", 55, "UNIDADE", "2", "864"],
  ["643", "CAIXA DE PERFUROCORTANTE 13 LITROS", 234, "UNIDADE", "1", "76"],
  ["697", "MICROPORE  5 CM X 4,5 M", 148, "UNIDADE", "2", "90"],
  ["1096", "SACARATO DE HIDROXIDO FERRICO 20 MG/ML", 259, "AMPOLA", "5", "44"],
  ["790", "MEROPENEM 1G PO PARA SUSP", 182, "FRASCO / AMPOLA", "25", "945"],
];
const unitWidth: Record<string, number> = { "FRASCO / AMPOLA": 107, UNIDADE: 54, "BOLSA PLÁSTICA": 98, AMPOLA: 48 };
const digits = (s: string) => s.length * 6.9;

function ItemsGrid() {
  return (
    <div>
      <HeadRow>
        <HeadCell />
        <HeadCell $pl={2}><T w={62} c="#fff">Cod. Prod.</T></HeadCell>
        <HeadCell $pl={3}><T w={125} c="#fff">Descrição do Produto</T></HeadCell>
        <HeadCell $pl={3}><T w={47} c="#fff">Unidade</T></HeadCell>
        <HeadCell $end $pr={4}><T w={39} c="#fff">Quant.</T></HeadCell>
        <HeadCell $end $pr={4}><T w={33} c="#fff">Saldo</T></HeadCell>
        <HeadCell $pl={2}><T w={89} c="#fff">Rastreabilidade</T></HeadCell>
        <HeadCell $pl={2}><T w={25} c="#fff">Lote</T></HeadCell>
        <HeadCell $pl={2}><T w={50} c="#fff">Validade</T></HeadCell>
        <HeadCell $pl={2}><T w={29} c="#fff">Falta</T></HeadCell>
        <HeadCell $pl={1}><T w={16} c="#fff">CT</T></HeadCell>
        <HeadCell $pl={2}><T w={24} c="#fff">Alta</T></HeadCell>
        <HeadCell />
        <HeadCell $end $pr={5}><T w={56} c="#fff">Prescritor</T></HeadCell>
      </HeadRow>
      {items.map((r, i) => (
        <ItemRow key={i} $odd={i % 2 === 0}>
          <Marker>{i === 0 && <svg width="7" height="11" viewBox="0 0 7 11"><path d="M0 0l7 5.500L0 11z" /></svg>}</Marker>
          <ItemCell $end $sel={i === 0}><T w={digits(r[0])} c={i === 0 ? "#fff" : undefined}>{r[0]}</T></ItemCell>
          <ItemCell $pl={4}><T b w={r[2]} s={12}>{r[1]}</T></ItemCell>
          <ItemCell $pl={4}><T w={unitWidth[r[3]]}>{r[3]}</T></ItemCell>
          <ItemCell $end><T w={digits(r[4])}>{r[4]}</T></ItemCell>
          <ItemCell $end><T w={digits(r[5])}>{r[5]}</T></ItemCell>
          <ItemCell />
          <ItemCell>{r[6] && <T w={r[6].length > 8 ? 79 : 49}>{r[6]}</T>}</ItemCell>
          <ItemCell>{r[7] && <T w={62}>{r[7]}</T>}</ItemCell>
          <ItemCell />
          <ItemCell $blank $pl={4}>{i === 0 && <Flag />}</ItemCell>
          <ItemCell $blank />
          <ItemCell />
          <ItemCell />
        </ItemRow>
      ))}
    </div>
  );
}

function RequestSection() {
  return (
    <RequestBox>
      <RequestForm>
        <Line $h={24} $cols="66px 3px 89px 5px 16px 43px 41px 2px 89px 5px 16px 5px 21px 30px 154px 2px 102px">
          <Cell $end><T w={62}>Prescrição</T></Cell>
          <i />
          <Field $self="start" />
          <i />
          <Hand />
          <i />
          <T w={40}>Pedido</T>
          <i />
          <Field $self="start" $right><T b w={35}>12175</T></Field>
          <i />
          <Hand />
          <i />
          <SmallButton><RedCheck /></SmallButton>
          <i />
          <T b s={16.5} w={154}>Unidade de Estoque</T>
          <i />
          <Field $self="end"><T b>1</T></Field>
        </Line>
        <Line $h={24} $cols="66px 3px 89px 6px 41px 2px 65px 181px 24px 3px 211px">
          <Cell $end><T w={27}>Data</T></Cell>
          <i />
          <Field $self="start"><T b w={65}>24/01/2023</T></Field>
          <i />
          <T w={41}>Horário</T>
          <i />
          <Field $self="start"><T b w={32}>14:50</T></Field>
          <i />
          <T w={24}>Tipo</T>
          <i />
          <TypeCombo>
            <TypeValue><T b w={43} s={12}>1-Saida</T></TypeValue>
            <Centered><Chevron /></Centered>
          </TypeCombo>
        </Line>
        <Line $h={22} $cols="66px 2px 50px 2px 570px">
          <Cell $end><T w={51}>C. Custo</T></Cell>
          <i />
          <Field $right><T b w={14}>30</T></Field>
          <i />
          <Field $combo><T b w={183}>INTERNAMENTO DOMICILIAR</T><DropButton><Chevron /></DropButton></Field>
        </Line>
      </RequestForm>
      <BigBarcode><Barcode w={113} h={70} /></BigBarcode>
      <LotBlock>
        <LotFrame><Barcode w={83} h={46} soft /></LotFrame>
        <LotLabel><T b s={13} w={168} c="#118a11">Preencher Lote e validade</T></LotLabel>
      </LotBlock>
    </RequestBox>
  );
}

function AttendanceSection() {
  return (
    <Attendance>
      <Legend><T b w={92} s={12.5}>ATENDIMENTO</T></Legend>
      <Line $h={22} $cols="66px 2px 70px 2px 20px 3px 21px 7px 371px 26px 100px">
        <Cell $end><T w={45}>Número</T></Cell>
        <i />
        <Field $right><T b w={42}>243804</T></Field>
        <i />
        <SmallButton $off><GridIcon /></SmallButton>
        <i />
        <SmallButton $off><Binoculars /></SmallButton>
        <i />
        <T b w={165}>FELINTO JOSE DA ROCHA</T>
        <T w={23}>Tipo</T>
        <T b s={12.5} w={85}>Internamento</T>
      </Line>
      <Line $h={19} $mt={1} $cols="66px 2px 122px 30px 166px 23px 86px 93px 100px">
        <Cell $end><T w={56}>Admissão</T></Cell>
        <i />
        <T b w={64}>01/04/2022</T>
        <T w={27}>Hora</T>
        <T b w={32}>16:42</T>
        <T w={21}>CID</T>
        <T b w={24}>G12</T>
        <T w={90}>Codigo Principal</T>
        <T b w={68}>80.01.901-3</T>
      </Line>
      <Line $h={17} $cols="66px 2px 224px 118px 260px">
        <Cell $end><T w={52}>Convênio</T></Cell>
        <i />
        <T b w={147}>UNIMED DO SUDOESTE</T>
        <T w={115}>Médico Responsável</T>
        <T b w={239}>IVO MARIO MOREIRA GOMES JUNIOR</T>
      </Line>
      <Line $h={22} $cols="66px 3px 50px 1px 570px">
        <Cell $end><T w={65}>Tratamento</T></Cell>
        <i />
        <Field $right><T b c="#101070">0</T></Field>
        <i />
        <Field $combo><DropButton><Chevron /></DropButton></Field>
      </Line>
    </Attendance>
  );
}

function Tools() {
  return (
    <ToolStrip>
      <ToolGroup $w={170}>
        <GroupLabel><T b s={11} w={68} c="#000080">Navegando...</T></GroupLabel>
        <ButtonRow>
          <ToolButton><NavArrow dir="l" bar /></ToolButton>
          <ToolButton><NavArrow dir="l" /></ToolButton>
          <ToolButton><NavArrow dir="r" /></ToolButton>
          <ToolButton><NavArrow dir="r" bar /></ToolButton>
        </ButtonRow>
      </ToolGroup>
      <ToolGroup $w={136} $pl={7}>
        <GroupLabel $ml={0}><T s={11.5} w={26}>Ação</T></GroupLabel>
        <ButtonRow>
          <ToolButton><Pour /></ToolButton>
          <ToolButton><Pencil /></ToolButton>
          <ToolButton><Basket /></ToolButton>
        </ButtonRow>
      </ToolGroup>
      <ToolGroup $w={93} $pl={8}>
        <GroupLabel><T s={11.5} w={61}>Confirmação</T></GroupLabel>
        <ButtonRow>
          <ToolButton $soft><Floppy /></ToolButton>
          <ToolButton $soft><Stop /></ToolButton>
        </ButtonRow>
      </ToolGroup>
      <div>
        <GroupLabel $ml={6}><T s={11.5} w={50}>Impressão</T></GroupLabel>
        <PrintButton>
          <Centered><Printer /></Centered>
          <PrintChecks><Check /><Check /></PrintChecks>
        </PrintButton>
      </div>
      <ToolButton $w={66} $mt={17} $ml={8}>
        <T s={11} w={50}>Assinatura</T>
        <T s={11} w={48}>Eletrônica</T>
      </ToolButton>
      <ToolButton $w={48} $mt={17} $ml={4}><T b s={11} w={45}>Etiqueta</T></ToolButton>
      <ToolButton $w={48} $mt={17} $ml={4}>
        <T b s={11} w={45}>Etiqueta</T>
        <T b s={11} w={39}>s/ soro</T>
      </ToolButton>
      <LegendList>
        <LegendItem><Dot $c="#808000" /><T w={91}>Ponto de Pedido</T></LegendItem>
        <LegendItem><Dot $c="#f00" /><T w={83}>Saldo Negativo</T></LegendItem>
      </LegendList>
      <PrintedBadge><T s={11} w={44}>Impresso</T></PrintedBadge>
      <ToolButton $w={80} $mt={17} $ml={13}><T b s={13} w={72}>Destravar ?</T></ToolButton>
      <Cost>
        <T w={33}>Custo</T>
        <T s={20} w={42}>0,00</T>
      </Cost>
      <Spacer />
      <ToolButton $w={103} $h={52} $mt={4}><T b s={11} w={95}>Etiqueta Paciente</T></ToolButton>
      <ToolButton $w={45} $h={52} $mt={4} $ml={8} $mr={5}><T b s={11} w={28}>Lista</T></ToolButton>
    </ToolStrip>
  );
}

function TaskbarSection() {
  return (
    <Taskbar>
      <Apps>
        {apps.map((a, i) => (
          <AppSlot key={i} $active={a.active}>
            {a.node || <Ico>{a.icon}</Ico>}
            {a.run && <RunMark $active={a.active} />}
          </AppSlot>
        ))}
      </Apps>
      <Tray>
        {tray.map((t, i) => <Centered key={i}><Ico s={i === 0 ? 13 : 16}>{t}</Ico></Centered>)}
        <TrayText><T f={SEGOE} s={11.5} w={23}>POR</T><T f={SEGOE} s={11.5} w={26}>PTB2</T></TrayText>
        <Centered><svg width="16" height="16" viewBox="0 0 16 16"><path d="M9 1.500H1v10h12V7M4 15h7M7 12v3M10.500 1h4v4h-4zM12.500 5v9" fill="none" stroke="#222" strokeWidth="1.200" /></svg></Centered>
        <Centered><svg width="16" height="14" viewBox="0 0 16 14"><path d="M1 5h2l4-3v10L3 9H1zM9 5q1.500 2 0 4M11 3.500q3 3.500 0 7" fill="none" stroke="#222" strokeWidth="1.100" /><path d="M13 2q4 5 0 10" fill="none" stroke="#aaa" /></svg></Centered>
        <TrayText $end><T f={SEGOE} s={11.5} w={29}>07:54</T><T f={SEGOE} s={11.5} w={61}>27/01/2023</T></TrayText>
        <Centered><Notice><T f={SEGOE} s={10} c="#fff">2</T></Notice></Centered>
      </Tray>
    </Taskbar>
  );
}

export default function App() {
  return (
    <Screen>
      <Global />
      <TitleBar>
        <ELogo />
        <T f={SEGOE} s={12} w={339} c="#858585">Sistema de Estoque - UNIMED SUDOESTE - [Cadastro de Saidas]</T>
        <Spacer />
        <WinControls>
          <svg width="15" height="11" viewBox="0 0 15 11"><path d="M2.500 5.500h10" stroke="#888" /></svg>
          <svg width="15" height="11" viewBox="0 0 15 11"><path d="M3.500 2.500h7v8h-7zM5.500 2V.5h7v8h-2" fill="none" stroke="#888" /></svg>
          <svg width="15" height="11" viewBox="0 0 15 11"><path d="M2.500.5l10 10M12.500.5l-10 10" stroke="#888" /></svg>
        </WinControls>
      </TitleBar>
      <MenuBar>
        <ELogo s={17} />
        <MenuItems>
          <T f={SEGOE} s={12} w={52} c="#989898"><u>C</u>adastros</T>
          <T f={SEGOE} s={12} w={80} c="#989898"><u>M</u>ovimentação</T>
          <T f={SEGOE} s={12} w={52} c="#989898"><u>R</u>elatórios</T>
          <T f={SEGOE} s={12} w={50} c="#989898"><u>U</u>tilitários</T>
          <T f={SEGOE} s={12} w={31} c="#989898"><u>A</u>juda</T>
        </MenuItems>
        <Spacer />
        <MdiControls>
          <MdiButton><svg width="8" height="8" viewBox="0 0 8 8"><path d="M1 6.500h6" stroke="#92a0b0" strokeWidth="2" /></svg></MdiButton>
          <MdiButton><svg width="9" height="9" viewBox="0 0 9 9"><path d="M1 4h5v4H1zM3 3V1h5v4H6.500" fill="none" stroke="#92a0b0" strokeWidth="1.300" /></svg></MdiButton>
          <MdiButton><svg width="8" height="8" viewBox="0 0 8 8"><path d="M1 1l6 6M7 1L1 7" stroke="#92a0b0" strokeWidth="2" /></svg></MdiButton>
        </MdiControls>
      </MenuBar>
      <Header>
        <Building />
        <HeaderTitles>
          <T f={TIMES} b s={23.5} w={195} c="#fff">Saidas de Produtos</T>
          <T f={TIMES} s={13.5} w={152} c="#fff">CopyRight© GA Informática</T>
        </HeaderTitles>
        <Spacer />
        <HeaderIcons>
          <RedArrowLeft /><TrolleyTile /><CartTile /><Molecule /><Puzzle /><Cards /><ZoomPlus /><MailGlobe /><Sms />
        </HeaderIcons>
      </Header>
      <NumberBar>
        <i />
        <LabelSlot><T b s={13} w={50} c="#fff">Número</T></LabelSlot>
        <Field $right $cream><T b w={35}>27993</T></Field>
        <HandButton><Hand /></HandButton>
        <i />
        <LabelSlot><Help /></LabelSlot>
        <LabelSlot><Help book /></LabelSlot>
      </NumberBar>
      <FormSurface>
        <RequestSection />
        <AttendanceSection />
      </FormSurface>
      <ItemsPanel>
        <PanelTitle>
          <T f={VERDANA} b s={12} w={196} c="#fff">Saidas de Itens Individuais</T>
          <Spacer />
          <DirectOption>
            <T f={VERDANA} b s={12} w={271} c="#fff">Dispensa Direto por Codigo de Barras</T>
            <Check />
          </DirectOption>
        </PanelTitle>
        <SideTools>
          <Help /><Sun /><SideFloppy /><Clipboard /><TrashSmall /><Gear /><Flask />
        </SideTools>
        <GridArea>
          <ItemsGrid />
          <ScrollTrack><ScrollThumb /></ScrollTrack>
        </GridArea>
      </ItemsPanel>
      <Tabs $mt={1} $pl={4}>
        <Tab $w={119} $on $pl={7}><T b s={13} w={103}>Itens Individuais</T></Tab>
        <Tab $w={46} $pl={4}><T b s={13} w={23}>Kits</T></Tab>
        <Tab $w={63} $pl={6}><T b s={13} w={51}>Resumo</T></Tab>
        <Tab $w={91} $pl={6}><T b s={13} w={81}>Observações</T></Tab>
      </Tabs>
      <Tools />
      <Tabs $white>
        <Tab $w={51} $on $pl={7}><T b s={13} w={35}>Ficha</T></Tab>
        <Tab $w={138} $pl={5}><T b s={13} w={128}>Lista Ultimas Saidas</T></Tab>
        <Tab $w={97} $pl={7}><T b s={13} w={85}>Lista Pedidos</T></Tab>
        <Tab $w={129} $pl={7}><T b s={13} w={117}>Prescrição Médica</T></Tab>
        <Tab $w={95} $pl={7}><T b s={13} w={85}>Aprazamento</T></Tab>
      </Tabs>
      <StatusBar>
        <T f={TIMES} s={13} w={278}>Usuário:229 FRANCISCO PETRONIO SANTOS SILVA</T>
        <Low><T f={TIMES} s={13} w={60}>Estoque nº 1</T></Low>
        <T f={TIMES} s={13} w={423}>UNIMED SUDOESTE - CopyRight© Antonio Ribeiro dos Santos Jr. - Versão: 2.1.2.42</T>
      </StatusBar>
      <TaskbarSection />

      <EdgeTab />
      <Annotation>
        <T f='"Lato", Carlito, sans-serif' s={24.5} w={1723} c="#f00">ESSE PEDIDO JÁ FOI IMPRESSO, ESTAMOS COM O DOCUMENTO EM MÃOS, MAS O SISTEMA PERGUNTA SE DESEJA DISPENSAR NOVAMENTE E O STATUS</T>
        <T f='"Lato", Carlito, sans-serif' s={24.5} w={330} c="#f00">DE IMPRESSO NAO APARECE.</T>
      </Annotation>
      <DialogShadow />
      <Dialog>
        <DialogTitle>
          <T f={SEGOE} s={11.5} w={49}>Confirme</T>
          <svg width="10" height="10" viewBox="0 0 10 10"><path d="M0 0l10 10M10 0L0 10" stroke="#111" strokeWidth="1.100" /></svg>
        </DialogTitle>
        <DialogBody>
          <InfoIcon />
          <DialogText>
            <T f={SEGOE} s={11.5} w={79}>Saída nº: 27993</T>
            <T f={SEGOE} s={11.5} w={281}>ref. a CPS: 243804 Paciente: FELINTO JOSE DA ROCHA</T>
            <T f={SEGOE} s={11.5} w={216}>não foi dispensada na conta do paciente.</T>
            <T f={SEGOE} s={11.5} w={232}>Paramatro(saidaimpressa) Deseja dispensar?</T>
          </DialogText>
        </DialogBody>
        <DialogFooter>
          <DialogButton $focus><FocusRing $on><T f={SEGOE} s={11.5} w={20}><u>S</u>im</T></FocusRing></DialogButton>
          <DialogButton><FocusRing><T f={SEGOE} s={11.5} w={22}><u>N</u>ão</T></FocusRing></DialogButton>
        </DialogFooter>
      </Dialog>
      <ArrowOverlay>
        <svg width="130" height="120" viewBox="0 0 130 120">
          <path d="M119 14L46 80" stroke="#f00" strokeWidth="11" strokeLinecap="round" />
          <path d="M7 113L37 65l8 8 7 8 6.500 8.500z" fill="#f00" />
        </svg>
      </ArrowOverlay>
    </Screen>
  );
}
